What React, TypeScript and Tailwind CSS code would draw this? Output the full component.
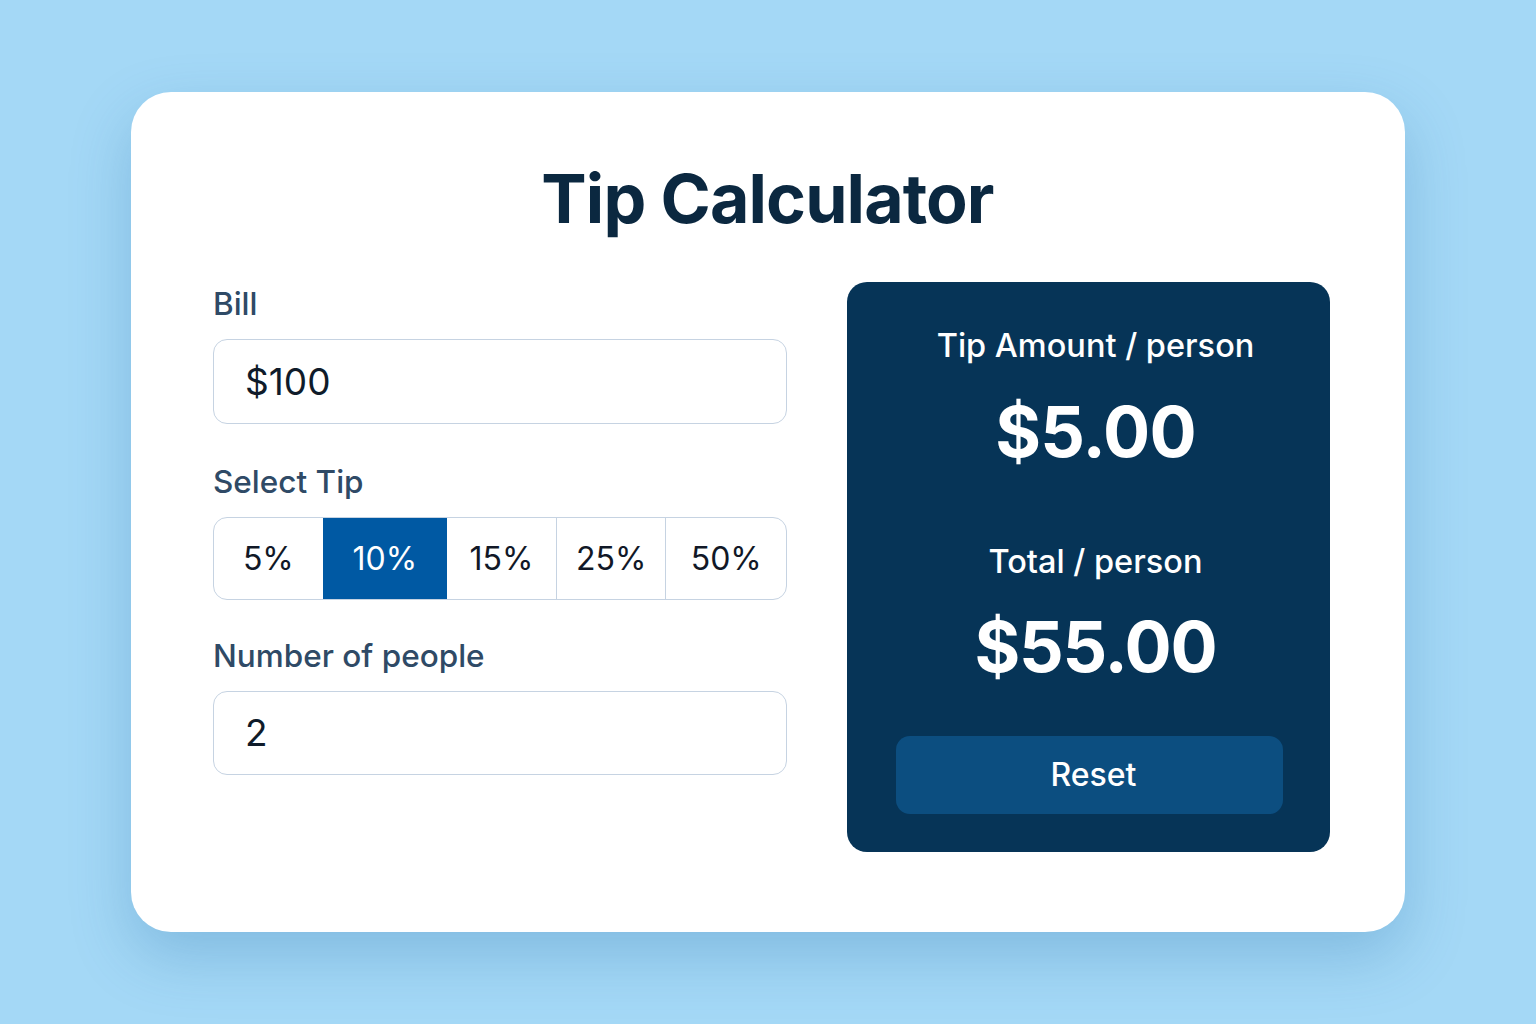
const tips = [
  { label: "5%", width: "w-[109px]", active: false },
  { label: "10%", width: "w-[125px]", active: true },
  { label: "15%", width: "w-[109px]", active: false },
  { label: "25%", width: "w-[110px]", active: false },
  { label: "50%", width: "w-[121px]", active: false },
];

const Label = ({ children }: { children: React.ReactNode }) => (
  <div className="text-[31.5px] leading-[36px] font-medium text-[#2f4a66] mb-[17px]">
    {children}
  </div>
);

export default function App() {
  return (
    <div className="h-[1024px] w-full bg-[#a4d8f6] flex items-center justify-center font-['Inter',sans-serif]">
      <div className="w-[1274px] h-[840px] bg-white rounded-[40px] shadow-[0_24px_60px_rgba(40,110,170,0.28)] pt-[72px] pl-[82px] pr-[75px]">
        <h1 className="text-center text-[68px] leading-[68px] font-bold text-[#0b2840] tracking-[-0.9px] pr-[8px]">
          Tip Calculator
        </h1>

        <div className="mt-[50px] flex gap-[60px] items-start">
          <div className="w-[574px] pt-[4px]">
            <Label>Bill</Label>
            <div className="h-[85px] border border-[#c6d3e2] rounded-[14px] flex items-center px-[31px] text-[37px] text-[#0f1b2a]">
              $100
            </div>

            <div className="mt-[40px]">
              <Label>Select Tip</Label>
              <div className="h-[83px] border border-[#c6d3e2] rounded-[14px] overflow-hidden flex">
                {tips.map((t, i) => (
                  <div
                    key={t.label}
                    className={`${t.width} flex items-center justify-center text-[32px] ${
                      i > 0 && !t.active && !tips[i - 1].active ? "border-l border-[#c6d3e2]" : ""
                    } ${t.active ? "bg-[#0059a3] text-white" : "text-[#111827]"}`}
                  >
                    {t.label}
                  </div>
                ))}
              </div>
            </div>

            <div className="mt-[38px]">
              <Label>Number of people</Label>
              <div className="h-[84px] border border-[#c6d3e2] rounded-[14px] flex items-center px-[31px] text-[37px] text-[#0f1b2a]">
                2
              </div>
            </div>
          </div>

          <div className="w-[483px] h-[570px] bg-[#063457] rounded-[20px] pt-[44px] pl-[49px] pr-[47px] flex flex-col text-white">
            <div className="flex flex-col items-center pl-[12px]">
              <div className="text-[32.5px] leading-[40px] font-medium">Tip Amount / person</div>
              <div className="mt-[30px] text-[70px] leading-[72px] font-bold tracking-[-0.8px]">$5.00</div>
              <div className="mt-[74px] text-[32.5px] leading-[40px] font-medium">Total / person</div>
              <div className="mt-[29px] text-[70px] leading-[72px] font-bold tracking-[-1.2px]">$55.00</div>
            </div>
            <button className="mt-[53px] w-full h-[78px] rounded-[14px] bg-[#0c4e80] text-[32px] font-medium text-white pl-[8px]">
              Reset
            </button>
          </div>
        </div>
      </div>
    </div>
  );
}
